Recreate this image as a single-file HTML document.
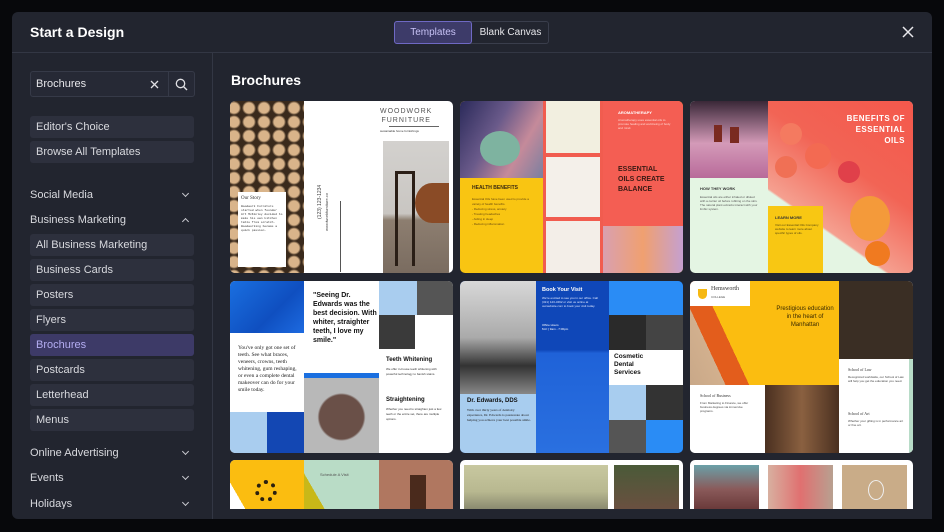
<!DOCTYPE html>
<html><head><meta charset="utf-8"><style>
*{margin:0;padding:0;box-sizing:border-box}
body{width:944px;height:532px;background:#07080b;font-family:"Liberation Sans",sans-serif;overflow:hidden;position:relative}
.a{position:absolute}
.modal{left:12px;top:12px;width:920px;height:507px;background:#22252f;border-radius:6px;overflow:hidden}
.item{position:absolute;left:30px;width:164px;height:22px;background:#2d303d;border-radius:3px;color:#d8d9de;font-size:11px;line-height:22px;padding-left:6px}
.cat{position:absolute;left:30px;width:164px;color:#d8d9de;font-size:11px;line-height:14px}
.cat i{position:absolute;right:6px;top:3px;width:5px;height:5px;border-right:1.3px solid #c9cad0;border-bottom:1.3px solid #c9cad0;transform:rotate(45deg)}
.cat i.up{transform:rotate(-135deg);top:6px}
.card{position:absolute;border-radius:5px;overflow:hidden;background:#fff}
.t{position:absolute;font-size:4px;line-height:5px;color:#333}
</style></head><body>
<div class="a modal"></div>
<div class="a" style="left:12px;top:52px;width:920px;height:1px;background:#333744"></div>
<div class="a" style="left:212px;top:53px;width:1px;height:466px;background:#333744"></div>
<div class="a" style="left:30px;top:24px;color:#fff;font-size:14px;font-weight:bold;line-height:16px">Start a Design</div>
<div class="a" style="left:394px;top:21px;width:155px;height:23px;border:1px solid #3a3e4c;border-radius:3px"></div>
<div class="a" style="left:394px;top:21px;width:78px;height:23px;background:#3d3b69;border:1px solid #6f69c4;border-radius:3px;color:#c7c2f5;font-size:10px;line-height:21px;text-align:center">Templates</div>
<div class="a" style="left:472px;top:21px;width:77px;height:23px;color:#e6e6ea;font-size:10px;line-height:23px;text-align:center">Blank Canvas</div>
<svg class="a" style="left:902px;top:26px" width="12" height="12"><path d="M1 1L11 11M11 1L1 11" stroke="#e8e8ec" stroke-width="1.5"/></svg>

<div class="a" style="left:30px;top:71px;width:165px;height:26px;border:1px solid #363a48;border-radius:3px;background:#262935"></div>
<div class="a" style="left:168px;top:71px;width:1px;height:26px;background:#363a48"></div>
<div class="a" style="left:36px;top:78px;color:#e6e6ea;font-size:11px">Brochures</div>
<svg class="a" style="left:150px;top:80px" width="9" height="9"><path d="M1 1L8 8M8 1L1 8" stroke="#e0e0e4" stroke-width="1.3"/></svg>
<svg class="a" style="left:175px;top:78px" width="13" height="13"><circle cx="5.5" cy="5.5" r="4.2" fill="none" stroke="#e0e0e4" stroke-width="1.3"/><path d="M8.7 8.7L12 12" stroke="#e0e0e4" stroke-width="1.4"/></svg>

<div class="item" style="top:116px">Editor's Choice</div>
<div class="item" style="top:141px">Browse All Templates</div>
<div class="cat" style="top:188px">Social Media<i></i></div>
<div class="cat" style="top:213px">Business Marketing<i class="up"></i></div>
<div class="item" style="top:234px">All Business Marketing</div>
<div class="item" style="top:259px">Business Cards</div>
<div class="item" style="top:284px">Posters</div>
<div class="item" style="top:309px">Flyers</div>
<div class="item" style="top:334px;background:#3d3a67;color:#b4adf2">Brochures</div>
<div class="item" style="top:359px">Postcards</div>
<div class="item" style="top:384px">Letterhead</div>
<div class="item" style="top:409px">Menus</div>
<div class="cat" style="top:446px">Online Advertising<i></i></div>
<div class="cat" style="top:471px">Events<i></i></div>
<div class="cat" style="top:497px;height:12px;overflow:hidden">Holidays<i></i></div>

<div class="a" style="left:231px;top:72px;color:#fff;font-size:14px;font-weight:bold">Brochures</div>

<!-- Row 1 card 1 -->
<div class="card" style="left:230px;top:101px;width:223px;height:172px">
 <div class="a" style="left:0;top:0;width:74px;height:172px;background:radial-gradient(circle at 7px 7px,#d9b48a 5px,#3a2a1c 7px);background-size:15px 14px;background-position:-3px 0"></div>
 <div class="a" style="left:8px;top:91px;width:48px;height:75px;background:#fff"></div>
 <div class="t" style="left:11px;top:95px;font-family:'Liberation Serif';font-size:5px">Our Story</div>
 <div class="t" style="left:11px;top:104px;width:42px;font-size:3px;line-height:4px;font-family:'Liberation Mono'">Woodwork Furniture started when founder Art McKinley decided to make his own kitchen table from scratch. Woodworking became a quick passion.</div>
 <div class="t" style="left:150px;top:6px;color:#555;font-size:7px;letter-spacing:1px;text-align:center;line-height:9px">WOODWORK<br>FURNITURE</div>
 <div class="a" style="left:159px;top:25px;width:50px;height:1px;background:#666"></div>
 <div class="t" style="left:150px;top:28px;font-size:3px">sustainable home furnishings</div>
 <div class="a" style="left:153px;top:40px;width:66px;height:132px;background:linear-gradient(#d3d1ce 0,#c9c6c2 55%,#8d7e70 60%,#7a6c60)"></div>
 <div class="a" style="left:185px;top:82px;width:34px;height:40px;border-radius:50% 0 0 50%;background:#8a4b26"></div>
 <div class="a" style="left:165px;top:70px;width:20px;height:95px;border:3px solid #2a1e16;border-bottom:none"></div>
 <div class="a" style="left:87px;top:118px;transform:rotate(-90deg);transform-origin:0 0;font-size:5px;color:#444;white-space:nowrap">(123) 123-1234</div>
 <div class="a" style="left:94px;top:130px;transform:rotate(-90deg);transform-origin:0 0;font-size:4px;color:#444;white-space:nowrap">woodworkfurniture.co</div>
 <div class="a" style="left:110px;top:100px;width:1px;height:71px;background:#555"></div>
</div>

<!-- Row 1 card 2 -->
<div class="card" style="left:460px;top:101px;width:223px;height:172px;background:#f9c512">
 <div class="a" style="left:0;top:0;width:83px;height:77px;background:linear-gradient(120deg,#2b2a5a,#6a5a8a 40%,#c58a9a 70%,#7a7fa0)"></div>
 <div class="a" style="left:20px;top:30px;width:40px;height:35px;border-radius:50%;background:#7eb3a0"></div>
 <div class="t" style="left:12px;top:85px;font-size:5px;font-weight:bold;color:#3a2a10">HEALTH BENEFITS</div>
 <div class="t" style="left:12px;top:96px;width:60px;font-size:3px;line-height:5px;color:#6a4a10">Essential Oils have been used to provide a variety of health benefits.<br>- Reducing stress, anxiety<br>- Treating headaches<br>- Aiding in sleep<br>- Reducing inflammation</div>
 <div class="a" style="left:83px;top:0;width:60px;height:172px;background:#f15c4f"></div>
 <div class="a" style="left:86px;top:0;width:54px;height:52px;background:#f2efe0"></div>
 <div class="a" style="left:86px;top:56px;width:54px;height:60px;background:#f4f0ea"></div>
 <div class="a" style="left:86px;top:120px;width:54px;height:52px;background:#f3eee8"></div>
 <div class="a" style="left:143px;top:0;width:80px;height:125px;background:#f45e53"></div>
 <div class="t" style="left:158px;top:9px;font-size:4px;color:#fff;font-weight:bold">AROMATHERAPY</div>
 <div class="t" style="left:158px;top:17px;width:55px;font-size:3px;line-height:4px;color:#ffd9d3">Aromatherapy uses essential oils to promote healing and well-being of body and mind.</div>
 <div class="t" style="left:158px;top:64px;font-size:7px;line-height:10px;color:#3a1a14;font-weight:bold">ESSENTIAL<br>OILS CREATE<br>BALANCE</div>
 <div class="a" style="left:143px;top:125px;width:80px;height:47px;background:linear-gradient(90deg,#d9a0b0,#f0a070 50%,#c5a0d0)"></div>
</div>

<!-- Row 1 card 3 -->
<div class="card" style="left:690px;top:101px;width:223px;height:172px;background:#e4f5e3">
 <div class="a" style="left:0;top:0;width:78px;height:77px;background:linear-gradient(#3a2838,#d49ab8 55%,#b86a9a)"></div>
 <div class="a" style="left:24px;top:24px;width:8px;height:17px;background:#7a2a20"></div>
 <div class="a" style="left:40px;top:26px;width:9px;height:16px;background:#7a2a20"></div>
 <div class="a" style="left:78px;top:0;width:145px;height:172px;background:linear-gradient(35deg,#e4f5e3 30%,#f5a090 31%,#f26455 60%,#f4584c)"></div>
 <div class="a" style="left:90px;top:22px;width:22px;height:22px;border-radius:50%;background:#f47a60"></div>
 <div class="a" style="left:115px;top:42px;width:26px;height:26px;border-radius:50%;background:#f36a52"></div>
 <div class="a" style="left:85px;top:55px;width:22px;height:22px;border-radius:50%;background:#f07055"></div>
 <div class="a" style="left:148px;top:60px;width:22px;height:22px;border-radius:50%;background:#e0404a"></div>
 <div class="a" style="left:160px;top:95px;width:40px;height:45px;border-radius:50%;background:#f49a3a"></div>
 <div class="a" style="left:175px;top:140px;width:25px;height:25px;border-radius:50%;background:#f07a20"></div>
 <div class="t" style="left:152px;top:12px;width:63px;text-align:right;font-size:8px;line-height:11px;color:#fff;font-weight:bold;letter-spacing:.5px">BENEFITS OF<br>ESSENTIAL<br>OILS</div>
 <div class="t" style="left:10px;top:85px;font-size:4px;font-weight:bold">HOW THEY WORK</div>
 <div class="t" style="left:10px;top:94px;width:58px;font-size:3px;line-height:4px;color:#555">Essential oils are either inhaled or diluted with a carrier oil before rubbing on the skin. The natural plant extracts interact with your limbic system.</div>
 <div class="a" style="left:78px;top:105px;width:55px;height:67px;background:#f8c713"></div>
 <div class="t" style="left:85px;top:114px;font-size:4px;font-weight:bold">LEARN MORE</div>
 <div class="t" style="left:85px;top:122px;width:45px;font-size:3px;line-height:4px;color:#5a4a10">Visit our Essential Oils Company website to learn more about specific types of oils.</div>
</div>

<!-- Row 2 card 1 -->
<div class="card" style="left:230px;top:281px;width:223px;height:172px">
 <div class="a" style="left:0;top:0;width:74px;height:52px;background:linear-gradient(135deg,#1a6fe0,#0f4fc0 60%,#1d6ae0)"></div>
 <div class="t" style="left:8px;top:64px;width:64px;font-family:'Liberation Serif';font-size:5.5px;line-height:7px;color:#222">You've only got one set of teeth. See what braces, veneers, crowns, teeth whitening, gum reshaping, or even a complete dental makeover can do for your smile today.</div>
 <div class="a" style="left:0;top:131px;width:37px;height:41px;background:#a9cdef"></div>
 <div class="a" style="left:37px;top:131px;width:37px;height:41px;background:#1347b3"></div>
 <div class="t" style="left:83px;top:10px;width:64px;font-size:7px;line-height:9px;font-weight:bold;color:#111">"Seeing Dr. Edwards was the best decision. With whiter, straighter teeth, I love my smile."</div>
 <div class="a" style="left:74px;top:92px;width:75px;height:80px;background:radial-gradient(circle at 50% 55%,#6a5048 22px,#b8b8b8 24px)"></div>
 <div class="a" style="left:74px;top:92px;width:75px;height:5px;background:#1a6fe0"></div>
 <div class="a" style="left:149px;top:0;width:38px;height:34px;background:#a9cdef"></div>
 <div class="a" style="left:187px;top:0;width:36px;height:34px;background:#555"></div>
 <div class="a" style="left:149px;top:34px;width:36px;height:34px;background:#3a3a3a"></div>
 <div class="t" style="left:156px;top:77px;font-size:6px;font-weight:bold;color:#111">Teeth Whitening</div>
 <div class="t" style="left:156px;top:86px;width:62px;font-size:3px;line-height:5px">We offer in-house teeth whitening with powerful technology to banish stains.</div>
 <div class="t" style="left:156px;top:117px;font-size:6px;font-weight:bold;color:#111">Straightening</div>
 <div class="t" style="left:156px;top:126px;width:62px;font-size:3px;line-height:5px">Whether you need to straighten just a few teeth or the entire set, there are multiple options.</div>
</div>

<!-- Row 2 card 2 -->
<div class="card" style="left:460px;top:281px;width:223px;height:172px;background:#1a56d0">
 <div class="a" style="left:0;top:0;width:76px;height:113px;background:linear-gradient(#d8d8d8,#aaa 50%,#333 75%,#888)"></div>
 <div class="a" style="left:0;top:113px;width:76px;height:59px;background:#a8cdef"></div>
 <div class="t" style="left:7px;top:118px;font-size:6px;font-weight:bold;color:#111">Dr. Edwards, DDS</div>
 <div class="t" style="left:7px;top:127px;width:64px;font-family:'Liberation Serif';font-size:3.5px;line-height:5px;color:#222">With over thirty years of dentistry experience, Dr. Edwards is passionate about helping you achieve your best possible smile.</div>
 <div class="a" style="left:76px;top:0;width:73px;height:172px;background:linear-gradient(#0f47b8 0,#0f47b8 40%,#1f62d8 42%,#2a70e0)"></div>
 <div class="t" style="left:82px;top:7px;font-size:5.5px;font-weight:bold;color:#fff">Book Your Visit</div>
 <div class="t" style="left:82px;top:15px;width:62px;font-size:3px;line-height:4px;color:#e0e8ff">We're excited to see you in our office. Call (321) 123-3492 or visit us online at ourwebsite.com to book your visit today.</div>
 <div class="t" style="left:82px;top:42px;font-size:3px;line-height:4px;color:#fff">Office Hours<br>M-F | 9am - 7:00pm</div>
 <div class="a" style="left:149px;top:0;width:74px;height:34px;background:#2a8cf5"></div>
 <div class="a" style="left:149px;top:34px;width:37px;height:35px;background:#2a2a2a"></div>
 <div class="a" style="left:186px;top:34px;width:37px;height:35px;background:#444"></div>
 <div class="a" style="left:149px;top:69px;width:74px;height:35px;background:#fff"></div>
 <div class="t" style="left:154px;top:72px;font-size:6.5px;line-height:8px;font-weight:bold;color:#111">Cosmetic<br>Dental<br>Services</div>
 <div class="a" style="left:149px;top:104px;width:37px;height:35px;background:#a8cdef"></div>
 <div class="a" style="left:186px;top:104px;width:37px;height:35px;background:#333"></div>
 <div class="a" style="left:149px;top:139px;width:37px;height:33px;background:#555"></div>
 <div class="a" style="left:186px;top:139px;width:37px;height:33px;background:#2a8cf5"></div>
</div>

<!-- Row 2 card 3 -->
<div class="card" style="left:690px;top:281px;width:223px;height:172px">
 <div class="a" style="left:0;top:0;width:149px;height:104px;background:linear-gradient(65deg,#c9a888 0,#d2b08e 18%,#e35d1c 18%,#e35d1c 30%,#fbbd10 30%)"></div>
 <div class="a" style="left:0;top:0;width:60px;height:25px;background:#fff"></div>
 <div class="a" style="left:8px;top:8px;width:9px;height:10px;background:#f6b812;border-radius:0 0 5px 5px"></div>
 <div class="t" style="left:21px;top:6px;font-size:6px;font-family:'Liberation Serif';color:#333">Hemsworth</div>
 <div class="t" style="left:21px;top:14px;font-size:3px;color:#555">COLLEGE</div>
 <div class="t" style="left:85px;top:24px;width:60px;text-align:center;font-size:6px;line-height:8px;color:#3a2a00">Prestigious education in the heart of Manhattan</div>
 <div class="a" style="left:0;top:104px;width:75px;height:68px;background:#fff"></div>
 <div class="t" style="left:10px;top:112px;font-size:4px;font-family:'Liberation Serif'">School of Business</div>
 <div class="t" style="left:10px;top:120px;width:55px;font-size:3px;line-height:4px;color:#444">From Marketing to Finance, we offer business degrees via immersive programs.</div>
 <div class="a" style="left:75px;top:104px;width:74px;height:68px;background:linear-gradient(90deg,#4a3020,#8a6040 50%,#4a3020)"></div>
 <div class="a" style="left:149px;top:0;width:74px;height:78px;background:#3a2e24"></div>
 <div class="a" style="left:149px;top:78px;width:74px;height:94px;background:#fff"></div>
 <div class="a" style="left:219px;top:78px;width:4px;height:94px;background:#b8dcc8"></div>
 <div class="t" style="left:158px;top:86px;font-size:4px;font-family:'Liberation Serif'">School of Law</div>
 <div class="t" style="left:158px;top:94px;width:56px;font-size:3px;line-height:4px;color:#444">Recognized worldwide, our School of Law will help you get the education you need.</div>
 <div class="t" style="left:158px;top:130px;font-size:4px;font-family:'Liberation Serif'">School of Art</div>
 <div class="t" style="left:158px;top:138px;width:56px;font-size:3px;line-height:4px;color:#444">Whether your gifting is in performance art or fine art.</div>
</div>

<!-- Row 3 -->
<div class="card" style="left:230px;top:460px;width:223px;height:49px;border-radius:5px 5px 0 0">
 <div class="a" style="left:0;top:0;width:74px;height:49px;background:linear-gradient(60deg,#fff 0,#fff 15%,#fbbd10 15%)"></div>
 <div class="a" style="left:74px;top:0;width:75px;height:49px;background:linear-gradient(60deg,#c8b818 0,#c8b818 20%,#b9dcc6 20%)"></div>
 <div class="t" style="left:90px;top:12px;font-size:4px;color:#555">Schedule A Visit</div>
 <div class="a" style="left:149px;top:0;width:74px;height:49px;background:#b07760"></div>
 <div class="a" style="left:180px;top:15px;width:16px;height:34px;background:#4a2a1c"></div>
 <div class="a" style="left:25px;top:20px;width:22px;height:22px;border-radius:50%;border:4px dotted #2a2010"></div>
</div>
<div class="card" style="left:460px;top:460px;width:223px;height:49px;border-radius:5px 5px 0 0">
 <div class="a" style="left:4px;top:5px;width:144px;height:44px;background:linear-gradient(#c8c8a0,#b8b890 60%,#8a8a70)"></div>
 <div class="a" style="left:154px;top:5px;width:65px;height:44px;background:linear-gradient(#4a5a38,#6a5040)"></div>
</div>
<div class="card" style="left:690px;top:460px;width:223px;height:49px;border-radius:5px 5px 0 0">
 <div class="a" style="left:4px;top:5px;width:65px;height:44px;background:linear-gradient(#6aa0a8,#8a5a5a 55%,#6a3a3a)"></div>
 <div class="a" style="left:78px;top:5px;width:65px;height:44px;background:linear-gradient(90deg,#d8b0a0,#e07070 50%,#b8a090)"></div>
 <div class="a" style="left:152px;top:5px;width:65px;height:44px;background:#c9ac88"></div>
 <div class="a" style="left:178px;top:20px;width:16px;height:20px;border-radius:50%;border:1px solid #eee"></div>
</div>
<div class="a" style="left:213px;top:509px;width:719px;height:10px;background:#22252f"></div>
</body></html>
